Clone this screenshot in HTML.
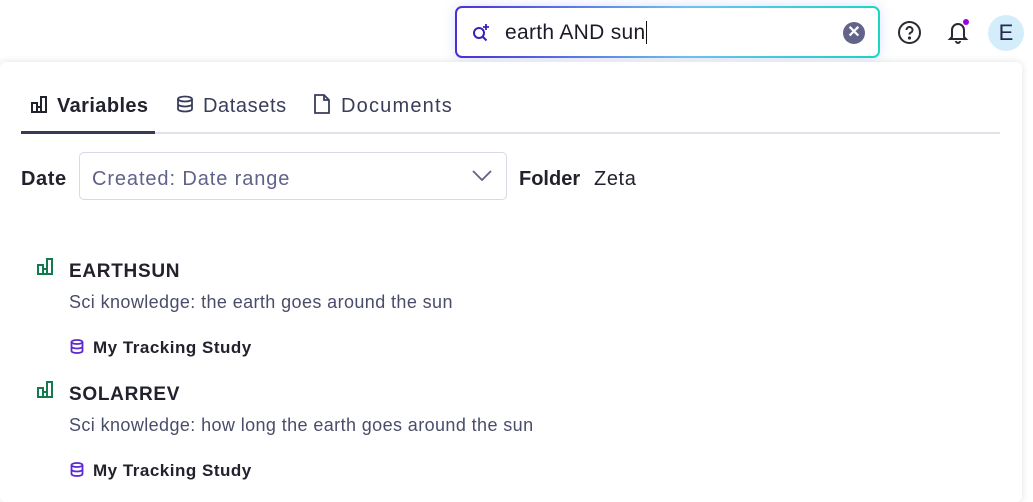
<!DOCTYPE html>
<html><head><style>
body{margin:0;width:1033px;height:496px;background:#fff;font-family:"Liberation Sans",sans-serif;position:relative;overflow:hidden;color:#22222e}
.abs{position:absolute}
.search{left:455px;top:6px;width:425px;height:52px;box-sizing:border-box;border-radius:7px;padding:2px;background:linear-gradient(90deg,#4a2fd6,#6ec3f0 55%,#19d7c0);box-shadow:0 0 12px rgba(120,140,255,.25)}
.search .in{background:#fff;border-radius:5px;width:100%;height:100%;position:relative}
.panel{left:0;top:62px;width:1022px;height:440px;background:#fff;border-radius:6px;box-shadow:0 0 8px rgba(0,0,0,.12)}
.t{font-size:20px}
.desc{font-size:18px;color:#4a4d6a;letter-spacing:.4px}
.study{font-size:17px;font-weight:bold;color:#22222e;letter-spacing:.5px}
</style></head><body>
<div class="abs search"><div class="in">
<svg class="abs" style="left:14px;top:14px" width="22" height="22" viewBox="0 0 22 22" fill="none" stroke="#3b1fc1" stroke-width="2"><circle cx="8" cy="11" r="5"/><path d="M11.5 14.5l4 4"/><path d="M15 2v6M12 5h6" stroke-width="1.8"/></svg>
<div class="abs" style="left:48px;top:13px;font-size:21px;color:#1c1c28;letter-spacing:.3px">earth AND sun<span style="border-left:1.5px solid #111;margin-left:1px"></span></div>
<div class="abs" style="left:386px;top:14px;width:22px;height:22px;border-radius:50%;background:#62648a;color:#fff;font-size:16px;font-weight:bold;text-align:center;line-height:22px">✕</div>
</div></div>
<svg class="abs" style="left:897px;top:20px" width="25" height="25" viewBox="0 0 25 25" fill="none" stroke="#2a2a33" stroke-width="2"><circle cx="12.5" cy="12.5" r="10.5"/><path d="M9.5 10a3 3 0 1 1 4 2.8c-.8.4-1 1-1 1.8" /><circle cx="12.5" cy="18" r=".6" fill="#2a2a33"/></svg>
<svg class="abs" style="left:946px;top:18px" width="26" height="28" viewBox="0 0 26 28" fill="none" stroke="#2a2a33" stroke-width="2"><path d="M6 19V12a6 6 0 0 1 12 0v7l2 2H4z"/><path d="M10 23a2 2 0 0 0 4 0"/><circle cx="20" cy="4" r="3" fill="#9a00e0" stroke="none"/></svg>
<div class="abs" style="left:988px;top:15px;width:36px;height:36px;border-radius:50%;background:#d3edfb;color:#262a50;font-size:22px;text-align:center;line-height:36px">E</div>
<div class="abs panel">
<svg class="abs" style="left:30px;top:33px" width="18" height="18" viewBox="0 0 18 18" fill="none" stroke="#22222e" stroke-width="2"><path d="M2 17V8h5v9M7 17V12h4v5M11 17V2h5v15H1"/></svg>
<div class="abs t" style="left:57px;top:33px;font-weight:bold;letter-spacing:.4px">Variables</div>
<svg class="abs" style="left:176px;top:33px" width="18" height="18" viewBox="0 0 18 18" fill="none" stroke="#3a3d5a" stroke-width="1.8"><ellipse cx="9" cy="4" rx="7" ry="2.5"/><path d="M2 4v10c0 1.4 3 2.5 7 2.5s7-1.1 7-2.5V4M2 9c0 1.4 3 2.5 7 2.5s7-1.1 7-2.5"/></svg>
<div class="abs t" style="left:203px;top:33px;color:#3a3d5a;letter-spacing:.6px">Datasets</div>
<svg class="abs" style="left:314px;top:32px" width="16" height="20" viewBox="0 0 16 20" fill="none" stroke="#3a3d5a" stroke-width="1.8"><path d="M1 1h9l5 5v13H1zM10 1v5h5"/></svg>
<div class="abs t" style="left:341px;top:33px;color:#3a3d5a;letter-spacing:1.2px">Documents</div>
<div class="abs" style="left:21px;top:70px;width:979px;height:2px;background:#e2e2ea"></div>
<div class="abs" style="left:21px;top:69px;width:134px;height:3px;background:#363a58"></div>
<div class="abs" style="left:21px;top:106px;font-size:20px;font-weight:bold;letter-spacing:.6px">Date</div>
<div class="abs" style="left:79px;top:90px;width:426px;height:46px;border:1px solid #d8d9e2;border-radius:5px"></div>
<div class="abs" style="left:92px;top:106px;font-size:20px;color:#5f628a;letter-spacing:.9px">Created: Date range</div>
<svg class="abs" style="left:472px;top:108px" width="20" height="12" viewBox="0 0 20 12" fill="none" stroke="#5f628a" stroke-width="1.8"><path d="M1 1l9 9 9-9"/></svg>
<div class="abs" style="left:519px;top:106px;font-size:20px;font-weight:bold">Folder</div>
<div class="abs" style="left:594px;top:106px;font-size:20px;letter-spacing:.6px">Zeta</div>

<svg class="abs" style="left:36px;top:195px" width="18" height="18" viewBox="0 0 18 18" fill="none" stroke="#137a50" stroke-width="2"><path d="M2 17V8h5v9M7 17V12h4v5M11 17V2h5v15H1"/></svg>
<div class="abs t" style="left:69px;top:199px;font-weight:bold;font-size:19px;letter-spacing:.7px">EARTHSUN</div>
<div class="abs desc" style="left:69px;top:230px">Sci knowledge: the earth goes around the sun</div>
<svg class="abs" style="left:70px;top:277px" width="14" height="15" viewBox="0 0 14 15" fill="none" stroke="#5a2ad0" stroke-width="1.8"><ellipse cx="7" cy="3" rx="5.5" ry="2"/><path d="M1.5 3v9c0 1.1 2.5 2 5.5 2s5.5-.9 5.5-2V3M1.5 7.5c0 1.1 2.5 2 5.5 2s5.5-.9 5.5-2"/></svg>
<div class="abs study" style="left:93px;top:276px">My Tracking Study</div>

<svg class="abs" style="left:36px;top:318px" width="18" height="18" viewBox="0 0 18 18" fill="none" stroke="#137a50" stroke-width="2"><path d="M2 17V8h5v9M7 17V12h4v5M11 17V2h5v15H1"/></svg>
<div class="abs t" style="left:69px;top:322px;font-weight:bold;font-size:19px;letter-spacing:.7px">SOLARREV</div>
<div class="abs desc" style="left:69px;top:353px">Sci knowledge: how long the earth goes around the sun</div>
<svg class="abs" style="left:70px;top:400px" width="14" height="15" viewBox="0 0 14 15" fill="none" stroke="#5a2ad0" stroke-width="1.8"><ellipse cx="7" cy="3" rx="5.5" ry="2"/><path d="M1.5 3v9c0 1.1 2.5 2 5.5 2s5.5-.9 5.5-2V3M1.5 7.5c0 1.1 2.5 2 5.5 2s5.5-.9 5.5-2"/></svg>
<div class="abs study" style="left:93px;top:399px">My Tracking Study</div>
</div>
</body></html>
